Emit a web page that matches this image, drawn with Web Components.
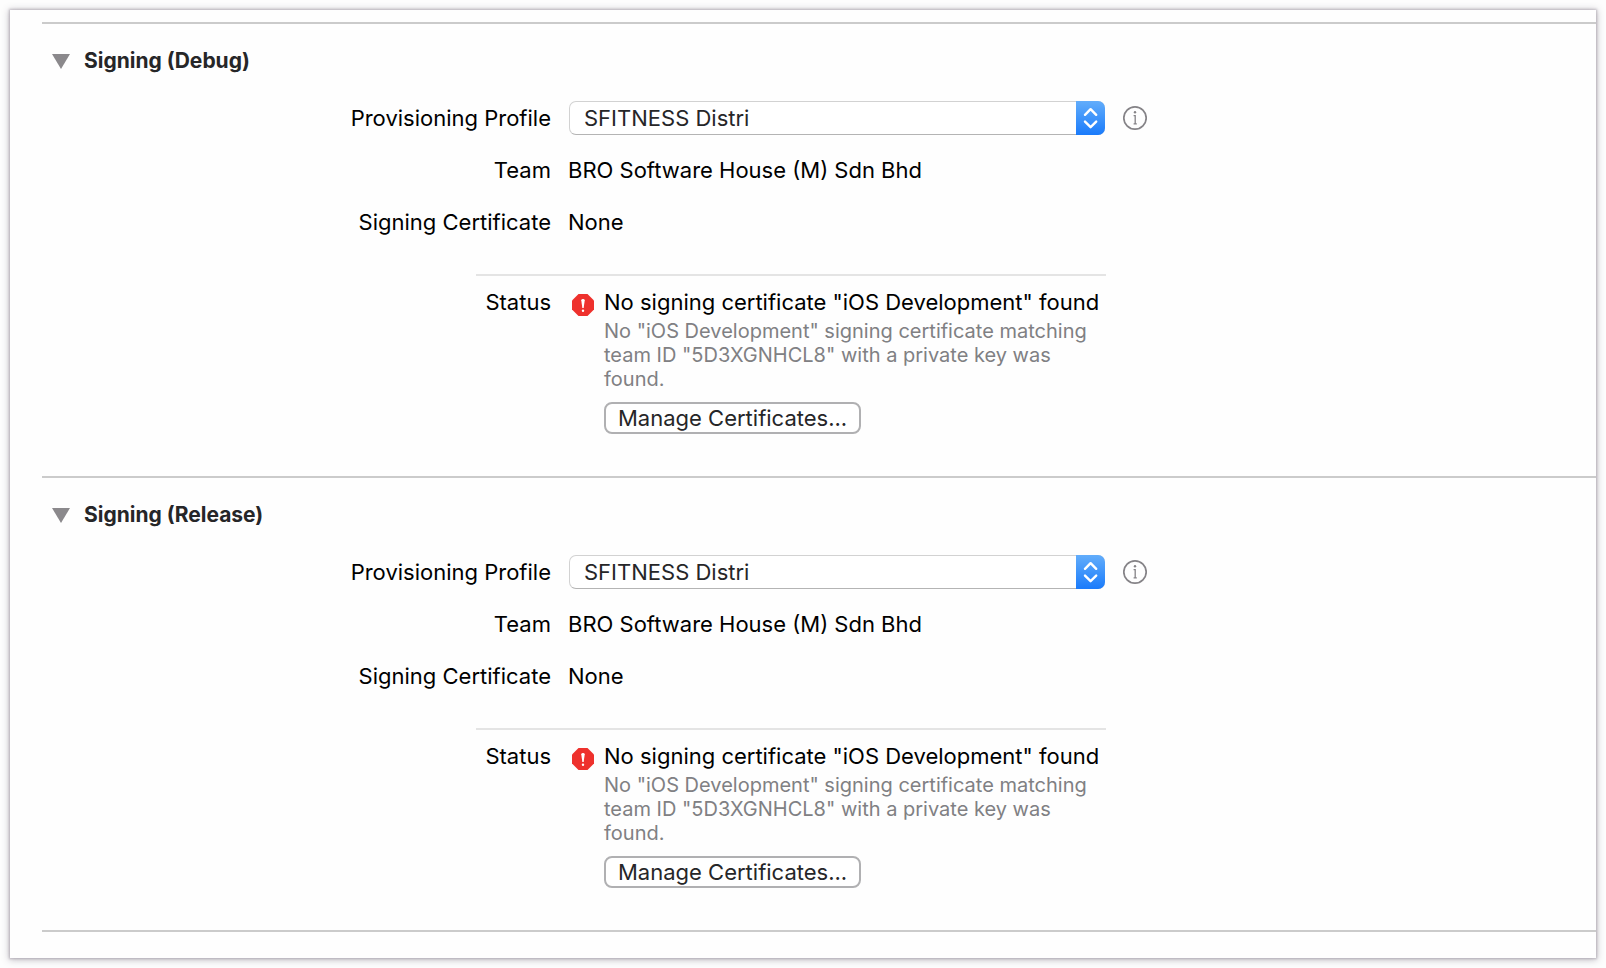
<!DOCTYPE html>
<html lang="en">
<head>
<meta charset="utf-8">
<meta name="viewport" content="width=device-width, initial-scale=1">
<title>Signing</title>
<style>
  body{margin:0;padding:10px;background:#fdfdfd;color:#000;
    font-family:Inter,"Open Sans",sans-serif;font-size:22px;line-height:26px;
    --label-w:509px;--field-w:538px;--gap:17px;}
</style>
</head>
<body>
<settings-panel>
  <signing-section heading="Signing (Debug)">
    <profile-row label="Provisioning Profile" value="SFITNESS Distri"></profile-row>
    <info-row label="Team">BRO Software House (M) Sdn Bhd</info-row>
    <info-row label="Signing Certificate">None</info-row>
    <status-block slot="status" label="Status">
      <span slot="title">No signing certificate "iOS Development" found</span>
      No "iOS Development" signing certificate matching team ID "5D3XGNHCL8" with a private key was found.
      <span slot="action">Manage Certificates...</span>
    </status-block>
  </signing-section>
  <signing-section heading="Signing (Release)">
    <profile-row label="Provisioning Profile" value="SFITNESS Distri"></profile-row>
    <info-row label="Team">BRO Software House (M) Sdn Bhd</info-row>
    <info-row label="Signing Certificate">None</info-row>
    <status-block slot="status" label="Status">
      <span slot="title">No signing certificate "iOS Development" found</span>
      No "iOS Development" signing certificate matching team ID "5D3XGNHCL8" with a private key was found.
      <span slot="action">Manage Certificates...</span>
    </status-block>
  </signing-section>
</settings-panel>

<script>
class SettingsPanel extends HTMLElement {
    constructor() {
        super();
        this.attachShadow({ mode: 'open' });
    }

    connectedCallback() {
        this.shadowRoot.innerHTML = `
      <style>
        :host{display:block;padding:12px 0 26px 32px;background:#fefefe;
          box-shadow:0 0 2px 1px rgba(120,112,125,.34), 0 1px 7px 1px rgba(80,70,90,.34);}
        main{border-bottom:2px solid #cbcbcb;}
      </style>
      <main><slot></slot></main>
    `;
    }
}

class SigningSection extends HTMLElement {
    constructor() {
        super();
        this.attachShadow({ mode: 'open' });
    }

    connectedCallback() {
        this.shadowRoot.innerHTML = `
      <style>
        :host{display:block;border-top:2px solid #cbcbcb;padding:24px 0 42px;}
        h2{margin:0 0 27px;font-size:21px;line-height:26px;}
        button{display:flex;align-items:center;gap:14px;margin:0;padding:0 0 0 10px;border:0;
          background:none;color:#262628;font:inherit;font-weight:700;}
        svg{display:block;fill:#8b898c;}
        [aria-expanded=false] svg{transform:rotate(-90deg);}
        .rows{display:flex;flex-direction:column;gap:18px;margin-bottom:35px;}
        [hidden]{display:none;}
      </style>
      <h2>
        <button type="button" aria-expanded="true">
          <svg width="18" height="15" viewBox="0 0 18 15" aria-hidden="true"><path d="M0 0H18L9 15Z"/></svg>
          <span></span>
        </button>
      </h2>
      <div class="body">
        <div class="rows"><slot></slot></div>
        <slot name="status"></slot>
      </div>
    `;
        const button = this.shadowRoot.querySelector('button');
        button.querySelector('span').textContent = this.getAttribute('heading');
        button.addEventListener('click', () => this.toggle(button));
    }

    toggle(button) {
        const open = button.getAttribute('aria-expanded') === 'true';
        button.setAttribute('aria-expanded', String(!open));
        this.shadowRoot.querySelector('.body').hidden = open;
    }
}

class ProfileRow extends HTMLElement {
    constructor() {
        super();
        this.attachShadow({ mode: 'open' });
    }

    connectedCallback() {
        this.shadowRoot.innerHTML = `
      <style>
        :host{display:grid;grid-template-columns:minmax(0,var(--label-w)) minmax(0,var(--field-w)) auto;
          column-gap:var(--gap);align-items:center;justify-content:start;}
        label{text-align:right;}
        .field{position:relative;margin:0 1px;}
        select{display:block;appearance:none;box-sizing:border-box;width:100%;height:34px;margin:0;
          padding:0 40px 0 14px;border:1px solid #d2d2d2;border-bottom:1px solid #b4b4b4;border-radius:7px;
          background:#fff;color:#262628;font:inherit;}
        .arrows{position:absolute;top:0;right:0;bottom:0;width:29px;border-radius:0 7px 7px 0;
          background:linear-gradient(#62adfb,#1a7bfb);pointer-events:none;}
        svg{display:block;fill:none;}
        .info{margin:0;padding:0;border:0;background:none;}
      </style>
      <label for="profile"></label>
      <div class="field">
        <select id="profile"><option></option></select>
        <span class="arrows">
          <svg width="29" height="34" viewBox="0 0 29 34" stroke="#fff" stroke-width="2.4" stroke-linecap="round" stroke-linejoin="round" aria-hidden="true">
            <path d="M9 13.8L14.6 8.2L20.2 13.8M9 20.6L14.6 26.2L20.2 20.6"/>
          </svg>
        </span>
      </div>
      <button class="info" type="button" aria-label="Profile information">
        <svg width="24" height="26" viewBox="1 0 24 26" stroke="#858387" aria-hidden="true">
          <circle cx="13" cy="13" r="11.2" stroke-width="1.7"/>
          <path d="M11.6 10.6H13.2V18.8M11.6 18.9H14.8" stroke-width="1.3"/>
          <circle cx="13" cy="7.3" r="1.2" fill="#858387" stroke="none"/>
        </svg>
      </button>
    `;
        this.shadowRoot.querySelector('label').textContent = this.getAttribute('label');
        this.shadowRoot.querySelector('option').textContent = this.getAttribute('value');
    }
}

class InfoRow extends HTMLElement {
    constructor() {
        super();
        this.attachShadow({ mode: 'open' });
    }

    connectedCallback() {
        this.shadowRoot.innerHTML = `
      <style>
        :host{display:grid;grid-template-columns:minmax(0,var(--label-w)) auto;column-gap:var(--gap);
          align-items:center;justify-content:start;min-height:34px;}
        .label{text-align:right;}
      </style>
      <span class="label"></span>
      <span><slot></slot></span>
    `;
        this.shadowRoot.querySelector('.label').textContent = this.getAttribute('label');
    }
}

class StatusBlock extends HTMLElement {
    constructor() {
        super();
        this.attachShadow({ mode: 'open' });
    }

    connectedCallback() {
        this.shadowRoot.innerHTML = `
      <style>
        :host{display:grid;grid-template-columns:75px 26px minmax(0,1fr);
          max-width:630px;margin-left:calc(var(--label-w) - 75px);padding-top:13px;border-top:2px solid #e4e4e4;}
        .label{text-align:right;}
        svg{display:block;margin:5px 0 0 21px;}
        .text{padding-left:27px;}
        .title{white-space:nowrap;}
        p{margin:4px 0 11px;color:#808083;font-size:20px;line-height:24px;}
        button{box-sizing:border-box;height:32px;padding:0 12px;border:2px solid #b0b0b2;border-radius:8px;
          background:#fff;color:#262628;font:inherit;line-height:26px;}
      </style>
      <span class="label"></span>
      <svg width="22" height="22" viewBox="0 0 22 22" role="img" aria-label="Error">
        <path fill="#ee312d" d="M6.5 0H15.5L22 6.5V15.5L15.5 22H6.5L0 15.5V6.5Z"/>
        <path fill="#fff" d="M9.3 6.2Q9.3 5 11 5T12.7 6.2L11.7 14H10.3Z"/>
        <circle cx="11" cy="16.8" r="1.2" fill="#fff"/>
      </svg>
      <div class="text">
        <div class="title"><slot name="title"></slot></div>
        <p><slot></slot></p>
        <button type="button"><slot name="action"></slot></button>
      </div>
    `;
        this.shadowRoot.querySelector('.label').textContent = this.getAttribute('label');
    }
}

customElements.define('settings-panel', SettingsPanel);
customElements.define('signing-section', SigningSection);
customElements.define('profile-row', ProfileRow);
customElements.define('info-row', InfoRow);
customElements.define('status-block', StatusBlock);
</script>
</body>
</html>
